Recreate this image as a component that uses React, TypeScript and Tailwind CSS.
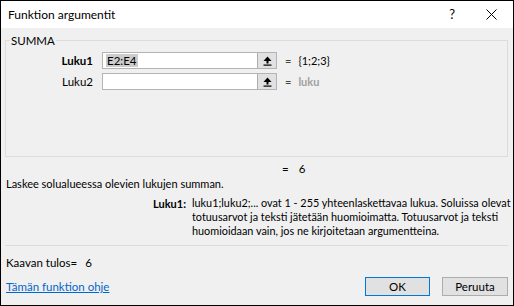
import React from 'react'

function UploadIcon() {
    return (
        <svg width="9" height="10" viewBox="0 0 9 10" className="block">
            <path d="M4.5 0.5 L8.5 5 H0.5 Z" fill="#000" />
            <rect x="3.5" y="4.5" width="2" height="3" fill="#000" />
            <rect x="0.5" y="8.5" width="8" height="1.2" fill="#000" />
        </svg>
    )
}

function ArgRow({ label, value, result, bold, muted }: { label: string; value: string; result: string; bold?: boolean; muted?: boolean }) {
    return (
        <div className="flex items-center h-[17px]">
            <div className={`w-[88px] text-right pr-px text-[11.5px] ${bold ? 'font-bold' : ''}`}>{label}</div>
            <div className="ml-[8px] w-[175px] h-[17px] flex border border-[#b4b4b4] bg-white">
                <div className="flex-1 flex items-center pl-[3px]">
                    {value && <span className="bg-[#cccccc] leading-[13px] px-px text-[11.5px]">{value}</span>}
                </div>
                <div className="w-[19px] h-full flex items-center justify-center bg-[#e1e1e1] border-l border-[#adadad]">
                    <UploadIcon />
                </div>
            </div>
            <div className="ml-[8px] text-[#444]">=</div>
            <div className={`ml-[7px] ${muted ? 'text-[#a0a0a0] font-bold' : 'text-black'}`}>{result}</div>
        </div>
    )
}

export default function App() {
    return (
        <div className="w-[514px] h-[306px] border border-black bg-[#f0f0f0] flex flex-col text-[11px] leading-[15px] text-black font-['Lato',sans-serif] overflow-hidden">
            {/* Title bar */}
            <div className="h-[27px] shrink-0 bg-white flex items-center pl-[7px] pr-[16px]">
                <span className="flex-1 text-[12px]">Funktion argumentit</span>
                <span className="text-[13px] mr-[31px]">?</span>
                <svg width="11" height="11" viewBox="0 0 11 11">
                    <path d="M0.5 0.5 L10.5 10.5 M10.5 0.5 L0.5 10.5" stroke="#000" strokeWidth="1" />
                </svg>
            </div>

            <div className="flex-1 flex flex-col pl-[4px] pr-[5px]">
                {/* Group box */}
                <fieldset className="mt-[5px] h-[124px] border border-[#dcdcdc] pl-0">
                    <legend className="ml-[4px] px-px leading-[15px] text-[11.5px]">SUMMA</legend>
                    <div className="flex flex-col gap-[4px] pt-[4px]">
                        <ArgRow label="Luku1" value="E2:E4" result="{1;2;3}" bold />
                        <ArgRow label="Luku2" value="" result="luku" muted />
                    </div>
                </fieldset>

                <div className="mt-[4px] h-[15px] flex pl-[277px] text-[11.5px]">
                    <span>=</span>
                    <span className="ml-[10px]">6</span>
                </div>
                <div className="mt-0 pl-px whitespace-nowrap">Laskee solualueessa olevien lukujen summan.</div>

                <div className="mt-[5px] flex">
                    <div className="w-[187px] shrink-0 text-right pr-[6px] font-bold">Luku1:</div>
                    <div className="leading-[14px] whitespace-nowrap text-[10.85px]">
                        luku1;luku2;... ovat 1 - 255 yhteenlaskettavaa lukua. Soluissa olevat<br />
                        totuusarvot ja teksti jätetään huomioimatta. Totuusarvot ja teksti<br />
                        huomioidaan vain, jos ne kirjoitetaan argumentteina.
                    </div>
                </div>

                <div className="mt-[7px] h-px bg-[#dcdcdc]" />

                <div className="mt-[9px] pl-px flex text-[11.5px]">
                    <span>Kaavan tulos=</span>
                    <span className="ml-[8px]">6</span>
                </div>

                <div className="mt-[7px] flex items-center text-[11.5px]">
                    <a className="flex-1 pl-px text-[#0066cc] underline">Tämän funktion ohje</a>
                    <button className="w-[65px] h-[19px] bg-[#e1e1e1] border border-[#0078d7]">OK</button>
                    <button className="ml-[12px] w-[66px] h-[19px] bg-[#e1e1e1] border border-[#adadad]">Peruuta</button>
                </div>
            </div>
        </div>
    )
}
